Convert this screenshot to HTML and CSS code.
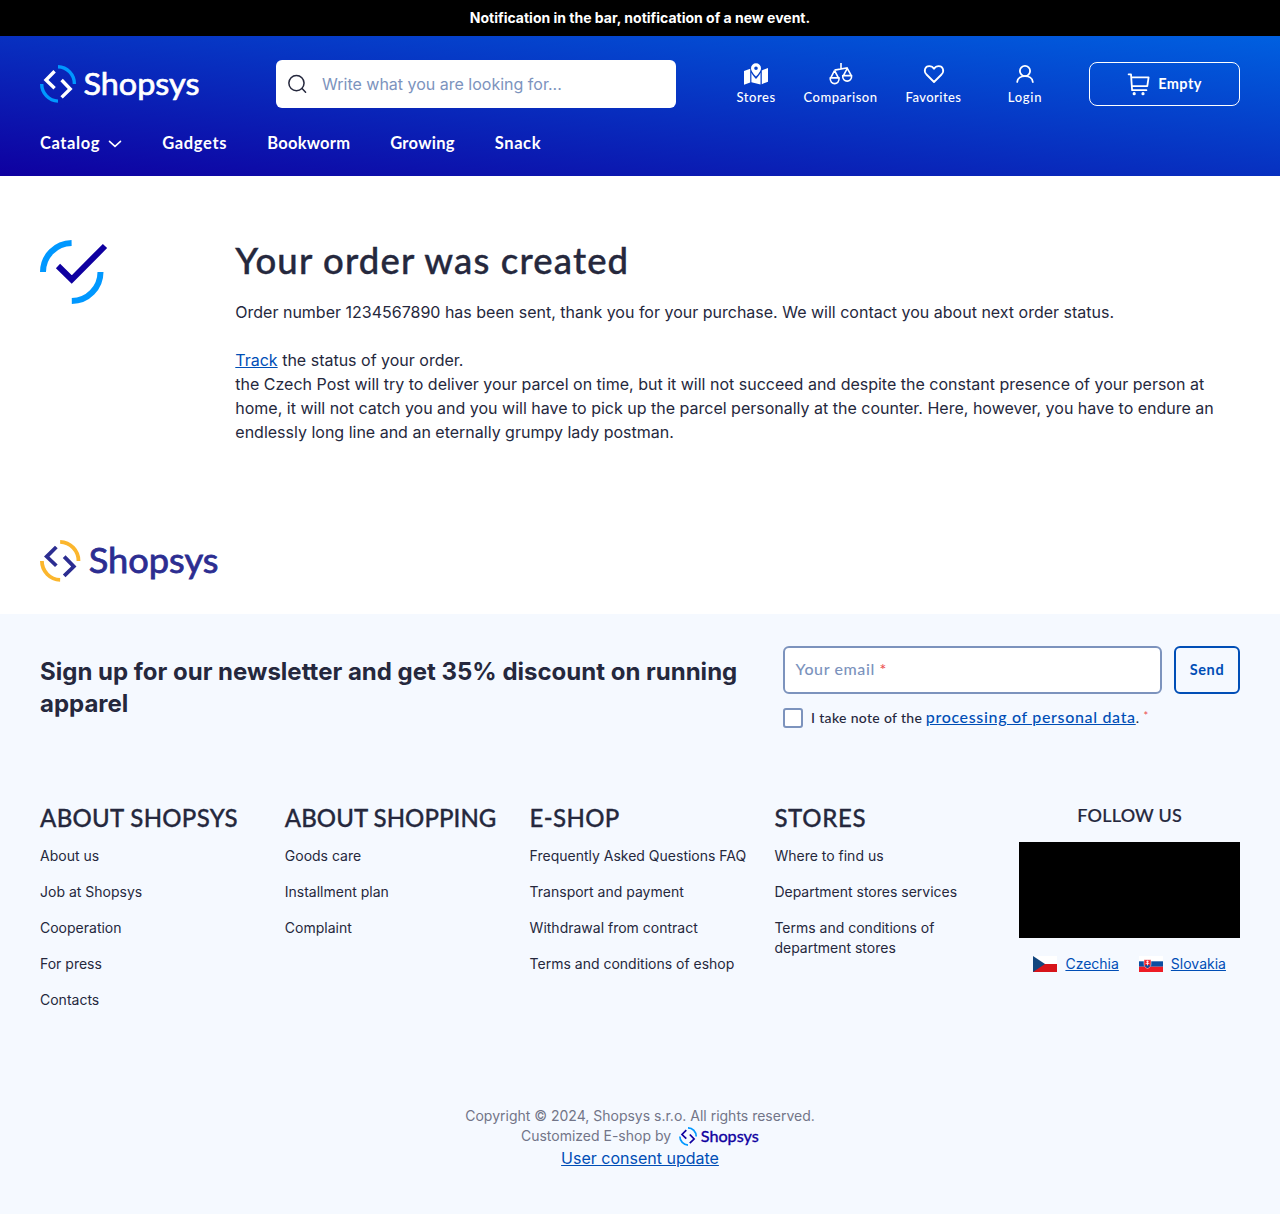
FILE: index.html
```html
<!DOCTYPE html>
<html lang="en">
<head>
<meta charset="utf-8">
<title>Your order was created</title>
<link rel="stylesheet" href="styles.css">
</head>
<body>
<svg class="defs" width="0" height="0" aria-hidden="true">
  <symbol id="logo" viewBox="0 0 160 38" preserveAspectRatio="none">
    <g fill="none" stroke-width="3.4">
      <g class="arc"><path d="M18 1.700A16.800 17.200 0 0 1 34.400 19"/><path d="M1.700 19A16.800 17.200 0 0 0 18 36.100"/></g>
      <path stroke="currentColor" d="M14.600 6.300 6 15l8.600 8.300M21.600 15l8.600 9-8.600 8.400"/>
    </g>
    <text class="wordmark" x="43.5" y="29.9" textLength="116" lengthAdjust="spacingAndGlyphs">Shopsys</text>
  </symbol>
</svg>
<div class="notice">Notification in the bar, notification of a new event.</div>
<header class="header">
  <div class="header-top">
    <svg class="logo logo-header"><use href="#logo"/></svg>
    <div class="search">
      <svg width="20" height="20" viewBox="0 0 20 20" fill="none" stroke="#25283d" stroke-width="1.6" stroke-linecap="round"><circle cx="8.9" cy="9" r="8"/><path d="m14.8 14.8 3.7 3.8"/></svg>
      <span>Write what you are looking for...</span>
    </div>
    <nav class="actions">
      <a class="action stores"><svg width="24" height="24" viewBox="0 0 24 24" fill="currentColor"><path fill-rule="evenodd" d="M12 1.200a5 5 0 0 1 5 5c0 3-3.300 6.500-5 8.300C10.300 12.700 7 9.200 7 6.200a5 5 0 0 1 5-5zm0 3.200a1.800 1.800 0 1 0 0 3.600 1.800 1.800 0 0 0 0-3.600z"/><path d="M0 9l6.200-2.300v13.700L0 22.700zM7.400 10.800C8.700 13.600 10.600 15.500 12 17c1.400-1.500 3.200-3.400 4.500-6.200v11.600L7.400 20.200zM17.800 8.400 24 6.100v13.600l-6.200 2.500z"/></svg><span>Stores</span></a>
      <a class="action comparison"><svg width="24" height="24" viewBox="0 0 24 24" fill="none" stroke="currentColor" stroke-width="1.600" stroke-linejoin="round"><path d="M12 1v6.500M5.500 8.100 18.800 5.800M5.500 8.500 1.900 15.600M5.500 8.500l3.800 7.100M1.200 15.900h8.900c.6 7.600-9.500 7.600-8.900 0zM18.300 6.300l-3.800 7M18.300 6.300l3.900 7M13.700 13.600h8.900c.6 7.400-9.500 7.400-8.900 0z"/></svg><span>Comparison</span></a>
      <a class="action favorites"><svg width="24" height="24" viewBox="0 0 24 24" fill="none" stroke="currentColor" stroke-width="1.800" stroke-linejoin="round"><path d="M12 20 4.500 12.500C1.200 8.900 3.100 4.200 7.200 4.200c2 0 3.800.9 4.800 2.500 1-1.600 2.800-2.500 4.800-2.500 4.100 0 6 4.700 2.700 8.300z"/></svg><span>Favorites</span></a>
      <a class="action login"><svg width="24" height="24" viewBox="0 0 24 24" fill="none" stroke="currentColor" stroke-width="1.800" stroke-linecap="round"><circle cx="12" cy="9" r="5.100"/><path d="M4.200 20c.8-7.800 14.800-7.800 15.600 0"/></svg><span>Login</span></a>
    </nav>
    <a class="cart"><svg width="24" height="24" viewBox="0 0 24 24" fill="none" stroke="currentColor" stroke-width="1.800" stroke-linejoin="round" stroke-linecap="round"><path d="M1.600 2.300H4l1.100 15.900h14.300M4.300 5.300h17.300l-1.300 8.900H5"/><circle cx="7.200" cy="21.700" r=".7" fill="currentColor"/><circle cx="16" cy="21.700" r=".7" fill="currentColor"/></svg><span>Empty</span></a>
  </div>
  <nav class="menu">
    <a class="m1"><span>Catalog</span><svg width="14" height="8" viewBox="0 0 14 8" fill="none" stroke="currentColor" stroke-width="1.600" stroke-linecap="round"><path d="m1.500 1.300 5.500 5 5.500-5"/></svg></a>
    <a class="m2">Gadgets</a><a class="m3">Bookworm</a><a class="m4">Growing</a><a class="m5">Snack</a>
  </nav>
</header>
<main class="confirmation">
  <svg class="check" width="68" height="64" viewBox="0 0 68 64" fill="none" stroke-width="6"><g stroke="#0098ff"><path d="M3 32A29 29 0 0 1 31.600 3M60.500 32A29 29 0 0 1 31.800 61"/></g><path stroke="#0f00a0" d="m18 26 13.700 13.500L65 6"/></svg>
  <div class="message">
    <h1>Your order was created</h1>
    <p>Order number 1234567890 has been sent, thank you for your purchase. We will contact you about next order status.</p>
    <p class="details"><a class="link">Track</a> the status of your order.<br>the Czech Post will try to deliver your parcel on time, but it will not succeed and despite the constant presence of your person at home, it will not catch you and you will have to pick up the parcel personally at the counter. Here, however, you have to endure an endlessly long line and an eternally grumpy lady postman.</p>
  </div>
</main>
<div class="brand"><svg class="logo logo-brand"><use href="#logo"/></svg></div>
<footer class="footer">
  <section class="newsletter">
    <h2>Sign up for our newsletter and get 35% discount on running apparel</h2>
    <form class="form">
      <div class="form-row">
        <div class="field">Your email <span class="req">*</span></div>
        <button type="button" class="send">Send</button>
      </div>
      <div class="consent"><span class="box"></span><span>I take note of the</span><a class="link policy">processing of personal data</a><span>.</span><sup>*</sup></div>
    </form>
  </section>
  <section class="columns">
    <div><h3 class="h-a">ABOUT SHOPSYS</h3><ul><li>About us</li><li>Job at Shopsys</li><li>Cooperation</li><li>For press</li><li>Contacts</li></ul></div>
    <div><h3 class="h-b">ABOUT SHOPPING</h3><ul><li>Goods care</li><li>Installment plan</li><li>Complaint</li></ul></div>
    <div><h3 class="h-c">E-SHOP</h3><ul><li>Frequently Asked Questions FAQ</li><li>Transport and payment</li><li>Withdrawal from contract</li><li>Terms and conditions of eshop</li></ul></div>
    <div><h3 class="h-d">STORES</h3><ul><li>Where to find us</li><li>Department stores services</li><li>Terms and conditions of department stores</li></ul></div>
    <div class="follow">
      <h4>FOLLOW US</h4>
      <div class="social"></div>
      <div class="countries">
        <a><svg width="24" height="16" viewBox="0 0 24 16"><path fill="#fff" d="M0 0h24v8H0z"/><path fill="#d7141a" d="M0 8h24v8H0z"/><path fill="#11457e" d="m0 0 12 8-12 8z"/></svg><span class="link">Czechia</span></a>
        <a><svg width="24" height="16" viewBox="0 0 24 16"><path fill="#fff" d="M0 0h24v6H0z"/><path fill="#0b4ea2" d="M0 5.300h24v5.400H0z"/><path fill="#ee1c25" d="M0 10.700h24V16H0z"/><path fill="#ee1c25" stroke="#fff" stroke-width=".5" d="M5 3.800h7v4c0 2.500-1.500 3.800-3.500 4.700C6.500 11.600 5 10.300 5 7.800z"/><path fill="#0b4ea2" d="M5.900 10c.6-1 1.400-1 2.600-1.200 1.200.2 2 .2 2.600 1.200-.6 1-1.600 1.700-2.600 2.200-1-.5-2-1.200-2.600-2.200z"/><path stroke="#fff" stroke-width=".8" d="M8.500 4.500v5M7.200 5.700h2.600M6.700 7.400h3.600"/></svg><span class="link">Slovakia</span></a>
      </div>
    </div>
  </section>
  <section class="legal">
    <p>Copyright © 2024, Shopsys s.r.o. All rights reserved.</p>
    <p class="made">Customized E-shop by <svg class="logo logo-small"><use href="#logo"/></svg></p>
    <a class="link consent-link">User consent update</a>
  </section>
</footer>
</body>
</html>
```
FILE: styles.css
```css
* { box-sizing: border-box; }
body { margin: 0; background: #fff; color: #25283d; font: 16px/24px Inter, "Noto Sans", sans-serif; }
h1, h2, h3, h4, p, ul { margin: 0; padding: 0; }
.defs { display: none; }
.link { color: #004eb6; text-decoration: underline; }
.notice { height: 36px; background: #000; color: #fff; font-size: 14px; line-height: 36px; font-weight: 700; text-align: center; }
.header { height: 140px; padding: 24px 40px 0; color: #fff; background: linear-gradient(to top right, #0f00a0, #0060e0); }
.header-top { display: flex; align-items: center; height: 48px; }
.logo { display: block; --arc: #0098ff; }
.arc { stroke: var(--arc); }
.wordmark { font: 400 31px Lato, sans-serif; fill: currentColor; stroke: currentColor; stroke-width: .7px; }
.logo-header { width: 160px; height: 38px; }
.search { display: flex; align-items: center; gap: 15px; width: 400px; height: 48px; margin-left: 76px; padding-left: 12px; border-radius: 6px; background: #fff; color: #7c93bd; }
.search svg { flex: none; width: 19px; }
.actions { display: flex; gap: 28px; margin-left: 60.500px; }
.action { display: flex; flex-direction: column; align-items: center; height: 46px; font: 500 13px/18px Lato, sans-serif; letter-spacing: .55px; white-space: nowrap; }
.action svg { margin: 1px 0 2px; flex: none; }
.stores { width: 39px; }
.comparison { width: 74px; }
.favorites { width: 56px; letter-spacing: .45px; }
.login { width: 34px; margin-left: 18.500px; letter-spacing: .7px; }
.cart { display: flex; align-items: center; justify-content: center; gap: 7px; width: 151px; height: 44px; margin-left: auto; border: 1px solid #fff; border-radius: 8px; font: 700 14.500px/20px Lato, sans-serif; letter-spacing: .45px; }
.menu { display: flex; gap: 40px; margin-top: 23px; font: 700 16.500px/24px Lato, sans-serif; }
.m1 { display: flex; align-items: center; gap: 8px; letter-spacing: .6px; }
.m1 svg { margin-top: 2px; }
.m2 { letter-spacing: .67px; }
.m3 { letter-spacing: .24px; }
.m4 { letter-spacing: .28px; }
.m5 { letter-spacing: .6px; }
.confirmation { display: flex; height: 364px; padding: 64px 40px 0; }
.check { flex: none; margin-right: 127.300px; }
.message h1 { height: 44px; margin-bottom: 16px; font: 500 36.500px/40px Lato, sans-serif; letter-spacing: 1.150px; -webkit-text-stroke: .4px; }
.details { margin-top: 24px; }
.brand { height: 74px; padding-left: 40px; color: #2c2d91; }
.logo-brand { --arc: #fbb62d; width: 179px; height: 42px; }
.footer { height: 600px; padding: 32px 40px 0; background: #f5f9ff; }
.newsletter { display: flex; justify-content: space-between; height: 155px; }
.newsletter h2 { width: 710px; padding-top: 10px; font-size: 24px; line-height: 32px; font-weight: 700; }
.form { width: 457px; }
.form-row { display: flex; gap: 12px; height: 48px; }
.field { flex: 1; padding: 9px 10.500px; border: 2px solid #7c93bd; border-radius: 6px; background: #fff; color: #7c93bd; font: 500 16px/24px Lato, sans-serif; letter-spacing: .6px; }
.req, sup { color: #ec5353; }
.send { width: 66px; padding: 0; border: 2px solid #004eb6; border-radius: 6px; background: none; color: #004eb6; font: 700 14.500px/20px Lato, sans-serif; letter-spacing: .6px; }
.consent { display: flex; align-items: center; height: 24px; margin-top: 12px; font: 500 14px/24px Lato, sans-serif; letter-spacing: .33px; white-space: nowrap; }
.box { width: 20px; height: 20px; margin-right: 8px; border: 2px solid #7c93bd; border-radius: 3px; background: #fff; }
.policy { margin: -2px 0 0 3.500px; font-size: 16px; letter-spacing: .67px; }
sup { margin: -4px 0 0 4px; font-size: 11px; line-height: 12px; }
.columns { display: grid; grid-template-columns: repeat(4, 220.800px) 221px; column-gap: 24px; height: 305px; font-size: 14px; line-height: 20px; }
h3 { height: 32px; font: 500 24px/34px Lato, sans-serif; margin-bottom: 13px; white-space: nowrap; -webkit-text-stroke: .3px; }
.h-a { letter-spacing: .3px; }
.h-b { letter-spacing: .05px; }
.h-c { letter-spacing: .35px; }
.h-d { letter-spacing: .67px; }
li { list-style: none; margin-bottom: 16px; }
h4 { font: 500 18px/28px Lato, sans-serif; letter-spacing: .2px; text-align: center; -webkit-text-stroke: .2px; }
.social { height: 96px; margin: 13px 0 16px; background: #000; }
.countries { display: flex; justify-content: center; gap: 20px; }
.countries a { display: flex; align-items: center; gap: 8px; }
.legal { display: flex; flex-direction: column; align-items: center; font-size: 14px; line-height: 20px; color: #727588; }
.made { display: flex; align-items: center; gap: 8px; }
.logo-small { width: 80px; height: 19px; color: #0f00a0; }
.consent-link { font-size: 16px; line-height: 24px; }
```
